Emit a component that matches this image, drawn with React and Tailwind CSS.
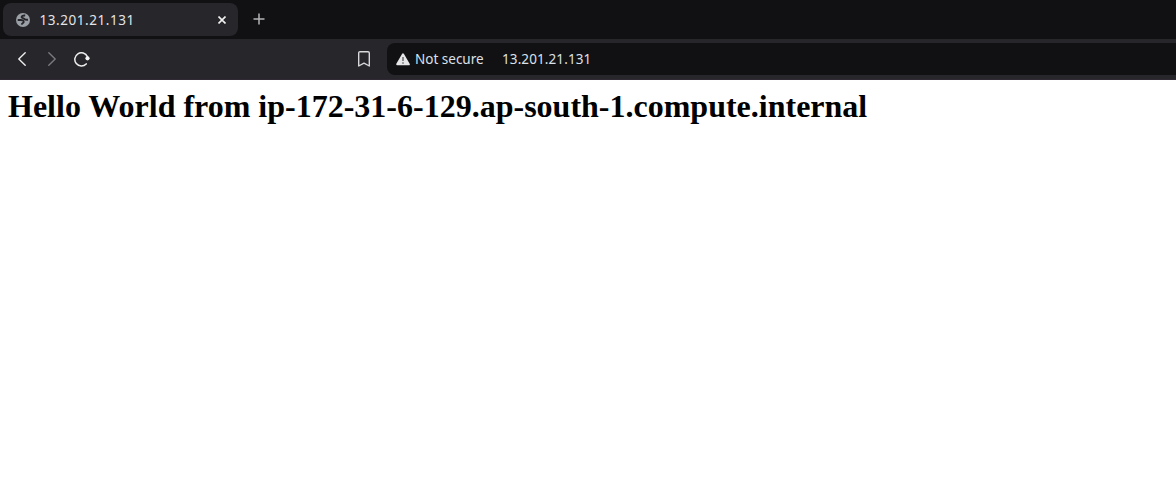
function GlobeIcon() {
  return (
    <svg className="block size-[14px]" viewBox="0 0 14 14" fill="none">
      <circle cx="7" cy="7" r="7" fill="#9aa0a6" />
      <path
        d="M9.2 2.5C7 2.2 5.5 3 5.6 4.2c.1 1.1 1.9.8 2.7 1.6.8.9 2.1 1.1 3.7.9M1.7 7h3c1.9 0 3.2.8 3 2.1-.2 1-1.7.9-2 2.6"
        stroke="#26262b"
        strokeWidth="1.9"
      />
    </svg>
  );
}

function CloseIcon() {
  return (
    <svg className="block size-2" viewBox="0 0 8 8" fill="none" stroke="#f1f1f1" strokeWidth="1.6">
      <path d="M.5.5l7 7M7.5.5l-7 7" />
    </svg>
  );
}

function PlusIcon() {
  return (
    <svg className="block size-3" viewBox="0 0 12 12" fill="none" stroke="#b4b4b8" strokeWidth="1.5">
      <path d="M6 .5v11M.5 6h11" />
    </svg>
  );
}

function Chevron({ forward }) {
  return (
    <svg className="block h-[14px] w-2" viewBox="0 0 8 14" fill="none" stroke={forward ? "#7a7a7f" : "#ededed"} strokeWidth="1.4" strokeLinecap="round" strokeLinejoin="round">
      <path d={forward ? "M.8.8L7.2 7 .8 13.2" : "M7.2.8L.8 7l6.4 6.2"} />
    </svg>
  );
}

function ReloadIcon() {
  return (
    <svg className="block h-[15px] w-4" viewBox="0 0 16 15" fill="none">
      <path d="M12.2 11.9A6.6 6.6 0 1 1 13.4 4.6" stroke="#ededed" strokeWidth="1.5" strokeLinecap="round" />
      <circle cx="13.5" cy="6.3" r="2.1" fill="#f4f4f4" />
    </svg>
  );
}

function BookmarkIcon() {
  return (
    <svg className="block h-4 w-3" viewBox="0 0 12 16" fill="none" stroke="#d8d8da" strokeWidth="1.4" strokeLinejoin="round">
      <path d="M2 .7h8c.8 0 1.3.5 1.3 1.3v13L6 12.2.7 15V2C.7 1.2 1.2.7 2 .7z" />
    </svg>
  );
}

function WarningIcon() {
  return (
    <svg className="block h-[13px] w-[14px]" viewBox="0 0 14 13">
      <path d="M7 1.3l5.8 10H1.2z" fill="#e6e6e8" stroke="#e6e6e8" strokeWidth="2" strokeLinejoin="round" />
      <path d="M7 4v4M7 9.3v1.5" stroke="#55555a" strokeWidth="1.3" />
    </svg>
  );
}

export default function App() {
  return (
    <div className="flex h-[490px] w-[1176px] flex-col overflow-hidden bg-white">
      <div className="flex h-[39px] shrink-0 bg-[#111113] pt-[3px] pl-[3px]">
        <div className="flex h-[33px] w-[235px] items-center rounded-lg bg-[#26262b] pr-3 pl-[13px] font-['Noto_Sans',sans-serif]">
          <GlobeIcon />
          <span className="ml-[9.5px] flex-1 pt-[3px] text-[13.5px] leading-none tracking-[0.56px] text-[#e4e4e6]">13.201.21.131</span>
          <CloseIcon />
        </div>
        <button aria-label="New tab" className="ml-[15px] flex h-[32px] items-center">
          <PlusIcon />
        </button>
      </div>

      <div className="flex h-[41px] shrink-0 items-start border-b border-[#302a35] bg-[#26262b] pt-1 pl-[18px]">
        <div className="flex h-8 w-[369px] items-center">
          <Chevron />
          <div className="ml-[22px]"><Chevron forward /></div>
          <div className="ml-[18px]"><ReloadIcon /></div>
          <div className="ml-auto mr-[17px]"><BookmarkIcon /></div>
        </div>
        <div className="flex h-8 flex-1 items-center rounded-l-lg bg-[#111113] pl-[9px] font-['Noto_Sans',sans-serif] text-[13.5px] leading-none text-[#dbe0e9]">
          <WarningIcon />
          <span className="ml-[5px] w-[87px] pt-px whitespace-nowrap">Not secure</span>
          <span className="pt-px tracking-[0.1px]">13.201.21.131</span>
        </div>
      </div>

      <h1 className="pt-2 pl-2 font-['Liberation_Serif',serif] text-[32px] leading-[37px] font-bold whitespace-nowrap text-black">
        Hello World from ip-172-31-6-129.ap-south-1.compute.internal
      </h1>
    </div>
  );
}
